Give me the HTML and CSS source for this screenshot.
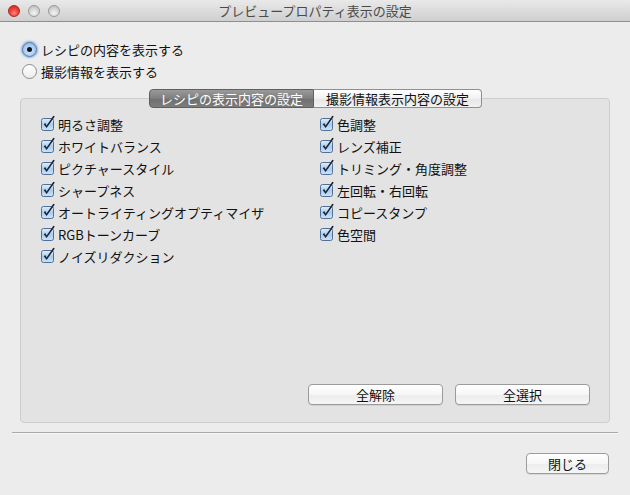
FILE: index.html
```html
<!DOCTYPE html>
<html lang="ja">
<head>
<meta charset="utf-8">
<title>プレビュープロパティ表示の設定</title>
<link rel="stylesheet" href="styles.css">
</head>
<body>
<div class="window">
  <div class="titlebar">
    <div class="lights">
      <span class="light red"></span>
      <span class="light gray"></span>
      <span class="light gray"></span>
    </div>
    <div class="title">プレビュープロパティ表示の設定</div>
    <div></div>
  </div>

  <div class="radios">
    <label class="radio-row"><span class="radio on"><span class="dot"></span></span>レシピの内容を表示する</label>
    <label class="radio-row"><span class="radio"></span>撮影情報を表示する</label>
  </div>

  <div class="tabs">
    <span class="tab active">レシピの表示内容の設定</span><span class="tab">撮影情報表示内容の設定</span>
  </div>

  <div class="group">
    <div class="checks">
      <div class="col">
        <div class="check"><svg class="cb" viewBox="0 0 16 16"><use href="#cbox"/></svg>明るさ調整</div>
        <div class="check"><svg class="cb" viewBox="0 0 16 16"><use href="#cbox"/></svg>ホワイトバランス</div>
        <div class="check"><svg class="cb" viewBox="0 0 16 16"><use href="#cbox"/></svg>ピクチャースタイル</div>
        <div class="check"><svg class="cb" viewBox="0 0 16 16"><use href="#cbox"/></svg>シャープネス</div>
        <div class="check"><svg class="cb" viewBox="0 0 16 16"><use href="#cbox"/></svg>オートライティングオプティマイザ</div>
        <div class="check"><svg class="cb" viewBox="0 0 16 16"><use href="#cbox"/></svg>RGBトーンカーブ</div>
        <div class="check"><svg class="cb" viewBox="0 0 16 16"><use href="#cbox"/></svg>ノイズリダクション</div>
      </div>
      <div class="col">
        <div class="check"><svg class="cb" viewBox="0 0 16 16"><use href="#cbox"/></svg>色調整</div>
        <div class="check"><svg class="cb" viewBox="0 0 16 16"><use href="#cbox"/></svg>レンズ補正</div>
        <div class="check"><svg class="cb" viewBox="0 0 16 16"><use href="#cbox"/></svg>トリミング・角度調整</div>
        <div class="check"><svg class="cb" viewBox="0 0 16 16"><use href="#cbox"/></svg>左回転・右回転</div>
        <div class="check"><svg class="cb" viewBox="0 0 16 16"><use href="#cbox"/></svg>コピースタンプ</div>
        <div class="check"><svg class="cb" viewBox="0 0 16 16"><use href="#cbox"/></svg>色空間</div>
      </div>
    </div>
    <div class="group-buttons">
      <button class="btn wide">全解除</button>
      <button class="btn wide">全選択</button>
    </div>
  </div>

  <div class="separator"></div>

  <div class="footer">
    <button class="btn close">閉じる</button>
  </div>
</div>

<svg width="0" height="0" class="defs">
  <defs>
    <linearGradient id="cbg" x1="0" y1="0" x2="0" y2="1">
      <stop offset="0" stop-color="#e4f0fb"/>
      <stop offset="0.5" stop-color="#a9ccef"/>
      <stop offset="1" stop-color="#cde3f8"/>
    </linearGradient>
    <symbol id="cbox" viewBox="0 0 16 16">
      <rect x="1.5" y="3.5" width="12" height="12" rx="2" fill="url(#cbg)" stroke="#4f6f96"/>
      <path d="M3.8 9.2 L6.6 13 L14.8 1.4 L13.3 0.7 L6.6 10.4 L5.2 8.1 Z" fill="#1b2230"/>
    </symbol>
  </defs>
</svg>
</body>
</html>
```

FILE: styles.css
```css
* { box-sizing: border-box; }

html, body {
  margin: 0;
  padding: 0;
}

body {
  width: 630px;
  height: 495px;
  overflow: hidden;
  background: #ececec;
  font-family: "Noto Sans CJK JP", "Noto Sans", "Liberation Sans", sans-serif;
  font-size: 13px;
  color: #111;
}

.defs { position: absolute; width: 0; height: 0; }

.window {
  width: 630px;
  height: 495px;
  display: flex;
  flex-direction: column;
  background: #ececec;
}

.titlebar {
  height: 22px;
  display: grid;
  grid-template-columns: 1fr auto 1fr;
  align-items: center;
  background: linear-gradient(#e9e9e9, #cfcfcf);
  border-bottom: 1px solid #8e8e8e;
  flex: none;
}

.lights {
  display: flex;
  gap: 8px;
  padding-left: 8px;
}

.light {
  width: 12px;
  height: 12px;
  border-radius: 50%;
  display: block;
}

.light.red {
  background: radial-gradient(circle at 50% 70%, #ff8a80 0%, #f0433a 45%, #c8221b 100%);
  border: 1px solid #a8281f;
}

.light.gray {
  background: radial-gradient(circle at 50% 70%, #f4f4f4 0%, #d6d6d6 50%, #b4b4b4 100%);
  border: 1px solid #9a9a9a;
}

.title {
  font-size: 13px;
  color: #4a4a4a;
  line-height: 22px;
}

.radios {
  padding: 16px 0 0 22px;
  display: flex;
  flex-direction: column;
}

.radio-row {
  height: 22px;
  display: flex;
  align-items: center;
  gap: 4px;
}

.radio {
  width: 15px;
  height: 15px;
  border-radius: 50%;
  border: 1px solid #8c8c8c;
  background: linear-gradient(#ffffff, #ececec);
  display: flex;
  align-items: center;
  justify-content: center;
  flex: none;
}

.radio.on {
  border-color: #4f76a8;
  background: radial-gradient(circle at 50% 60%, #d7e8fa 0%, #9cc3ec 70%, #7fa9da 100%);
  box-shadow: 0 0 2px 1px rgba(90, 150, 230, 0.7);
}

.radio .dot {
  width: 5px;
  height: 5px;
  border-radius: 50%;
  background: #10161f;
}

.tabs {
  margin-top: 7px;
  display: flex;
  justify-content: center;
  position: relative;
  z-index: 2;
  padding-left: 1px;
}

.tab {
  height: 19px;
  line-height: 17px;
  padding: 0;
  border: 1px solid #8f8f8f;
  background: linear-gradient(#ffffff, #f1f1f1 50%, #e6e6e6 51%, #f2f2f2);
  color: #111;
  font-size: 13px;
  display: block;
  white-space: nowrap;
  text-align: center;
}

.tab.active {
  width: 165px;
  background: linear-gradient(#9a9a9a, #7e7e7e 50%, #6e6e6e 51%, #7d7d7d);
  border-color: #5f5f5f;
  color: #fff;
  border-radius: 4px 0 0 4px;
}

.tab:last-child {
  width: 168px;
  border-left: none;
  border-radius: 0 4px 4px 0;
}

.group {
  margin: -10px 20px 0 20px;
  height: 325px;
  border: 1px solid #cdcdcd;
  border-radius: 4px;
  background: #e3e3e3;
  padding: 14px 19px 17px 19px;
  display: flex;
  flex-direction: column;
  flex: none;
}

.checks {
  display: grid;
  grid-template-columns: 279px 1fr;
}

.col {
  display: flex;
  flex-direction: column;
}

.check {
  height: 22px;
  display: flex;
  align-items: center;
  gap: 2px;
  white-space: nowrap;
}

.cb {
  width: 16px;
  height: 16px;
  flex: none;
  margin-top: -3px;
}

.group-buttons {
  margin-top: auto;
  display: flex;
  justify-content: flex-end;
  gap: 12px;
}

.btn {
  font-family: "Noto Sans CJK JP", "Noto Sans", sans-serif;
  font-size: 13px;
  color: #111;
  height: 21px;
  padding: 0;
  line-height: 19px;
  border: 1px solid #9b9b9b;
  border-radius: 4px;
  background: linear-gradient(#ffffff, #f6f6f6 50%, #ececec 51%, #f5f5f5);
  box-shadow: 0 1px 0 rgba(0, 0, 0, 0.08);
}

.btn.wide { width: 135px; }

.separator {
  margin: 9px 12px 0 12px;
  height: 1px;
  background: #a9a9a9;
  border-bottom: 1px solid #f6f6f6;
  box-sizing: content-box;
}

.footer {
  display: flex;
  justify-content: flex-end;
  padding: 19px 21px 0 0;
}

.btn.close { width: 83px; }
```
